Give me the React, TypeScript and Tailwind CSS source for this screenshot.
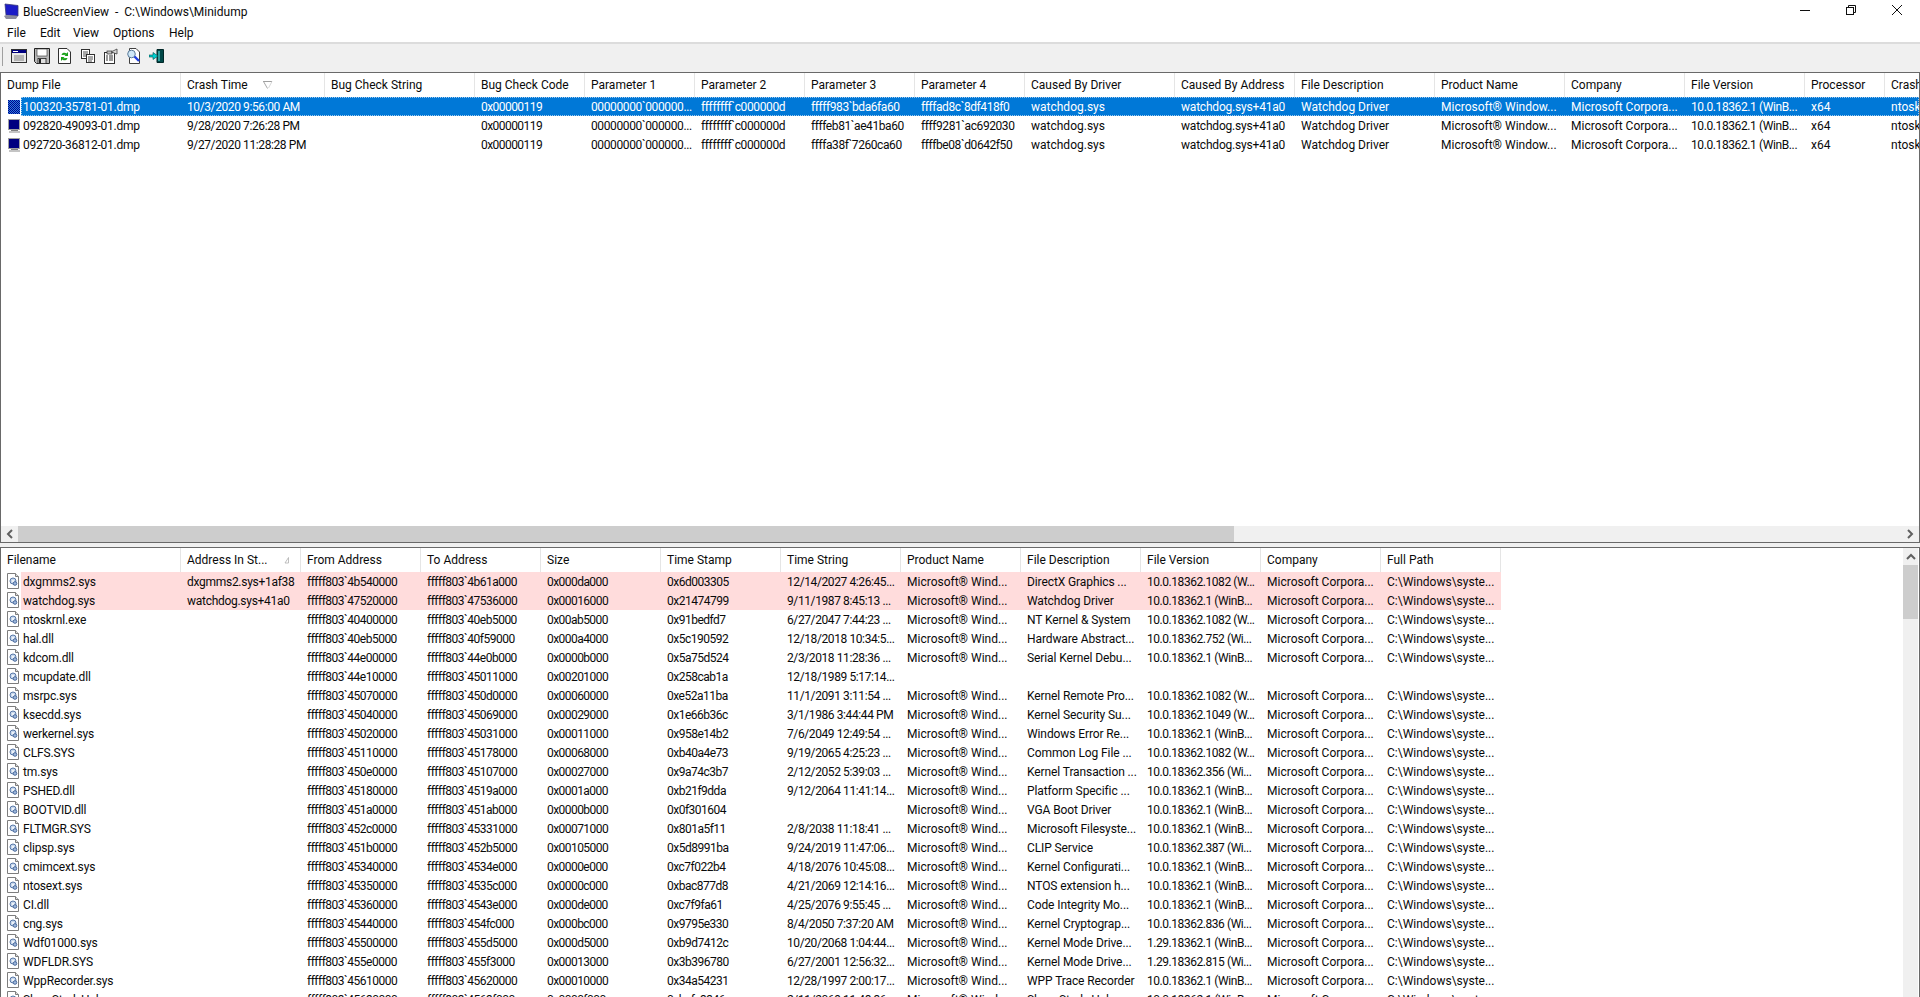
import React from "react";

const topCols = ["w-[180px]","w-[144px]","w-[150px]","w-[110px]","w-[110px]","w-[110px]","w-[110px]","w-[110px]","w-[150px]","w-[120px]","w-[140px]","w-[130px]","w-[120px]","w-[120px]","w-[80px]","w-[150px]"];
const botCols = ["w-[180px]","w-[120px]","w-[120px]","w-[120px]","w-[120px]","w-[120px]","w-[120px]","w-[120px]","w-[120px]","w-[120px]","w-[120px]","w-[120px]"];

const topTrack = ["tracking-[-0.25px]","tracking-[-0.4px]","","tracking-[-0.55px]","tracking-[-0.38px]","tracking-[-0.38px]","tracking-[-0.42px]","tracking-[-0.42px]","","tracking-[-0.2px]","","","","tracking-[-0.4px]","",""];
const botTrack = ["tracking-[-0.15px]","tracking-[-0.28px]","tracking-[-0.5px]","tracking-[-0.5px]","tracking-[-0.55px]","tracking-[-0.5px]","tracking-[-0.4px]","","tracking-[-0.1px]","tracking-[-0.45px]","",""];

const topHead = ["Dump File","Crash Time","Bug Check String","Bug Check Code","Parameter 1","Parameter 2","Parameter 3","Parameter 4","Caused By Driver","Caused By Address","File Description","Product Name","Company","File Version","Processor","Crash Address"];
const botHead = ["Filename","Address In St...","From Address","To Address","Size","Time Stamp","Time String","Product Name","File Description","File Version","Company","Full Path"];

const topTail = ["watchdog.sys","watchdog.sys+41a0","Watchdog Driver","Microsoft® Window...","Microsoft Corpora...","10.0.18362.1 (WinB...","x64","ntoskrnl.exe+1f"];
const topRows: string[][] = [
  ["100320-35781-01.dmp","10/3/2020 9:56:00 AM","","0x00000119","00000000`000000...","ffffffff`c000000d","fffff983`bda6fa60","ffffad8c`8df418f0",...topTail],
  ["092820-49093-01.dmp","9/28/2020 7:26:28 PM","","0x00000119","00000000`000000...","ffffffff`c000000d","ffffeb81`ae41ba60","ffff9281`ac692030",...topTail],
  ["092720-36812-01.dmp","9/27/2020 11:28:28 PM","","0x00000119","00000000`000000...","ffffffff`c000000d","ffffa38f`7260ca60","ffffbe08`d0642f50",...topTail],
];

type B = [string,string,string,string,string,string,string,string,string];
const P = "fffff803`";
const botData: B[] = [
  ["dxgmms2.sys","dxgmms2.sys+1af38","4b540000","4b61a000","0x000da000","0x6d003305","12/14/2027 4:26:45...","DirectX Graphics ...","10.0.18362.1082 (W..."],
  ["watchdog.sys","watchdog.sys+41a0","47520000","47536000","0x00016000","0x21474799","9/11/1987 8:45:13 ...","Watchdog Driver","10.0.18362.1 (WinB..."],
  ["ntoskrnl.exe","","40400000","40eb5000","0x00ab5000","0x91bedfd7","6/27/2047 7:44:23 ...","NT Kernel & System","10.0.18362.1082 (W..."],
  ["hal.dll","","40eb5000","40f59000","0x000a4000","0x5c190592","12/18/2018 10:34:5...","Hardware Abstract...","10.0.18362.752 (Wi..."],
  ["kdcom.dll","","44e00000","44e0b000","0x0000b000","0x5a75d524","2/3/2018 11:28:36 ...","Serial Kernel Debu...","10.0.18362.1 (WinB..."],
  ["mcupdate.dll","","44e10000","45011000","0x00201000","0x258cab1a","12/18/1989 5:17:14...","",""],
  ["msrpc.sys","","45070000","450d0000","0x00060000","0xe52a11ba","11/1/2091 3:11:54 ...","Kernel Remote Pro...","10.0.18362.1082 (W..."],
  ["ksecdd.sys","","45040000","45069000","0x00029000","0x1e66b36c","3/1/1986 3:44:44 PM","Kernel Security Su...","10.0.18362.1049 (W..."],
  ["werkernel.sys","","45020000","45031000","0x00011000","0x958e14b2","7/6/2049 12:49:54 ...","Windows Error Re...","10.0.18362.1 (WinB..."],
  ["CLFS.SYS","","45110000","45178000","0x00068000","0xb40a4e73","9/19/2065 4:25:23 ...","Common Log File ...","10.0.18362.1082 (W..."],
  ["tm.sys","","450e0000","45107000","0x00027000","0x9a74c3b7","2/12/2052 5:39:03 ...","Kernel Transaction ...","10.0.18362.356 (Wi..."],
  ["PSHED.dll","","45180000","4519a000","0x0001a000","0xb21f9dda","9/12/2064 11:41:14...","Platform Specific ...","10.0.18362.1 (WinB..."],
  ["BOOTVID.dll","","451a0000","451ab000","0x0000b000","0x0f301604","","VGA Boot Driver","10.0.18362.1 (WinB..."],
  ["FLTMGR.SYS","","452c0000","45331000","0x00071000","0x801a5f11","2/8/2038 11:18:41 ...","Microsoft Filesyste...","10.0.18362.1 (WinB..."],
  ["clipsp.sys","","451b0000","452b5000","0x00105000","0x5d8991ba","9/24/2019 11:47:06...","CLIP Service","10.0.18362.387 (Wi..."],
  ["cmimcext.sys","","45340000","4534e000","0x0000e000","0xc7f022b4","4/18/2076 10:45:08...","Kernel Configurati...","10.0.18362.1 (WinB..."],
  ["ntosext.sys","","45350000","4535c000","0x0000c000","0xbac877d8","4/21/2069 12:14:16...","NTOS extension h...","10.0.18362.1 (WinB..."],
  ["CI.dll","","45360000","4543e000","0x000de000","0xc7f9fa61","4/25/2076 9:55:45 ...","Code Integrity Mo...","10.0.18362.1 (WinB..."],
  ["cng.sys","","45440000","454fc000","0x000bc000","0x9795e330","8/4/2050 7:37:20 AM","Kernel Cryptograp...","10.0.18362.836 (Wi..."],
  ["Wdf01000.sys","","45500000","455d5000","0x000d5000","0xb9d7412c","10/20/2068 1:04:44...","Kernel Mode Drive...","1.29.18362.1 (WinB..."],
  ["WDFLDR.SYS","","455e0000","455f3000","0x00013000","0x3b396780","6/27/2001 12:56:32...","Kernel Mode Drive...","1.29.18362.815 (Wi..."],
  ["WppRecorder.sys","","45610000","45620000","0x00010000","0x34a54231","12/28/1997 2:00:17...","WPP Trace Recorder","10.0.18362.1 (WinB..."],
  ["SleepStudyHelper.sys","","45630000","4563f000","0x0000f000","0xbcfc3346","2/11/2069 11:48:36...","Sleep Study Helper","10.0.18362.1 (WinB..."],
];

const emptyMeta = (d: B) => d[0] === "mcupdate.dll";
const botRow = (d: B): string[] => [
  d[0], d[1], P + d[2], P + d[3], d[4], d[5], d[6],
  emptyMeta(d) ? "" : "Microsoft® Wind...", d[7], d[8],
  emptyMeta(d) ? "" : "Microsoft Corpora...",
  emptyMeta(d) ? "" : "C:\\Windows\\syste...",
];

function MonitorIcon({ selected }: { selected?: boolean }) {
  return (
    <svg width="16" height="16" viewBox="0 0 16 16" className="shrink-0">
      <defs>
        <pattern id="dith" width="2" height="2" patternUnits="userSpaceOnUse">
          <rect width="2" height="2" fill="#2a7fd8" />
          <rect width="1" height="1" fill="#000090" />
          <rect x="1" y="1" width="1" height="1" fill="#000090" />
        </pattern>
      </defs>
      <rect x="1" y="1" width="12" height="11" fill="#a0a0a0" />
      <rect x="2" y="2" width="10" height="9" fill="#000080" />
      <rect x="4" y="12" width="7" height="1" fill="#808080" />
      <rect x="2" y="13" width="11" height="2" fill="#c4c4c4" />
      {selected && <rect x="1" y="1" width="12" height="14" fill="url(#dith)" />}
    </svg>
  );
}

function DriverIcon() {
  return (
    <svg width="14" height="16" viewBox="0 0 14 16" className="shrink-0">
      <path d="M0.5 0.5H8.5L11.5 3.5V15.5H0.5Z" fill="#fff" stroke="#7d7d7d" />
      <path d="M8.5 0.5V3.5H11.5" fill="#e0e0e0" stroke="#7d7d7d" />
      <circle cx="6" cy="8" r="3" fill="#c8d8ec" stroke="#5878a8" />
      <circle cx="8" cy="10.5" r="1.8" fill="#9fb8dc" stroke="#4a6a9c" />
      <circle cx="6" cy="8" r="0.9" fill="#fff" />
    </svg>
  );
}

function SortUp() {
  return (
    <svg width="12" height="10" viewBox="0 0 12 10" className="shrink-0">
      <path d="M1 1.5H10" stroke="#a0a0a0" />
      <path d="M1.5 1.5L5.5 8.5" stroke="#a8a8a8" />
      <path d="M10 1.5L6.5 8" stroke="#d8d8d8" />
    </svg>
  );
}

function SortSmall() {
  return (
    <svg width="6" height="8" viewBox="0 0 6 8" className="shrink-0">
      <path d="M1 7H4.5V1.5Z" fill="none" stroke="#b0b0b0" strokeWidth="0.8" />
    </svg>
  );
}

function Cell({ w, t, children, first }: { w: string; t: string; children: React.ReactNode; first?: boolean }) {
  return (
    <div className={`${w} ${t} shrink-0 overflow-hidden whitespace-nowrap pt-[1px] ${first ? "pl-[22px]" : "pl-[6px]"}`}>
      {children}
    </div>
  );
}

function Header({ cols, labels, sortIdx, sort, gap }: { cols: string[]; labels: string[]; sortIdx: number; sort: React.ReactNode; gap: string }) {
  return (
    <div className="flex h-[24px] shrink-0 items-center">
      {labels.map((l, i) => (
        <div key={i} className={`${cols[i]} shrink-0 h-full flex items-center pl-[6px] border-r border-[#e5e5e5] overflow-hidden whitespace-nowrap`}>
          <span>{l}</span>
          {i === sortIdx && <span className={`flex ${gap}`}>{sort}</span>}
        </div>
      ))}
    </div>
  );
}

function TopScroll() {
  return (
    <div className="flex h-[16px] shrink-0 bg-[#f0f0f0]">
      <div className="w-[17px] flex items-center justify-center">
        <svg width="8" height="10" viewBox="0 0 8 10"><path d="M6 1L2 5L6 9" fill="none" stroke="#606060" strokeWidth="2" /></svg>
      </div>
      <div className="w-[1216px] bg-[#cdcdcd]" />
      <div className="flex-1" />
      <div className="w-[18px] flex items-center justify-center">
        <svg width="8" height="10" viewBox="0 0 8 10"><path d="M2 1L6 5L2 9" fill="none" stroke="#606060" strokeWidth="2" /></svg>
      </div>
    </div>
  );
}

function WinIcon({ d }: { d: React.ReactNode }) {
  return <svg width="16" height="16" viewBox="0 0 16 16" className="shrink-0">{d}</svg>;
}

const toolIcons: React.ReactNode[] = [
  <>
    <rect x="0.5" y="1.5" width="15" height="13" fill="#e8e8e8" stroke="#303030" />
    <rect x="1" y="2" width="14" height="3" fill="#000080" />
    <rect x="2" y="3" width="5" height="1" fill="#fff" />
    <path d="M3 8H13M3 10H13M3 12H13" stroke="#808080" />
  </>,
  <>
    <path d="M0.5 0.5H15.5V15.5H2.5L0.5 13.5Z" fill="#b8b8b8" stroke="#202020" />
    <rect x="3" y="1" width="10" height="7" fill="#fff" stroke="#303030" strokeWidth="0.6" />
    <rect x="4" y="10.5" width="8" height="5" fill="#e0e0e0" stroke="#202020" strokeWidth="0.8" />
    <rect x="5" y="11" width="2" height="4" fill="#202020" />
  </>,
  <>
    <path d="M1.5 0.5H10L13.5 4V15.5H1.5Z" fill="#fff" stroke="#303030" />
    <path d="M4.5 7A3 3 0 0 1 9.5 5.5L11 4V8H7.5L8.7 6.8" fill="#18a018" />
    <path d="M10.5 10A3 3 0 0 1 5.5 11.5L4 13V9H7.5L6.3 10.2" fill="#18a018" />
  </>,
  <>
    <rect x="1.5" y="1.5" width="8" height="9" fill="#fff" stroke="#303030" />
    <path d="M3 4H8M3 6H8M3 8H6" stroke="#505050" />
    <rect x="6.5" y="6.5" width="8" height="8" fill="#fff" stroke="#303030" />
    <path d="M8 9H13M8 11H13M8 13H12" stroke="#505050" />
  </>,
  <>
    <rect x="1.5" y="4.5" width="10" height="11" fill="#fff" stroke="#303030" />
    <rect x="4" y="3" width="5" height="3" fill="#c0c0c0" stroke="#303030" strokeWidth="0.7" />
    <path d="M3 8H5M3 10H5M3 12H5M6 8H10M6 10H10M6 12H10" stroke="#303030" />
    <path d="M8 4L14 1V6Z" fill="#d8d8d8" stroke="#404040" strokeWidth="0.8" />
  </>,
  <>
    <path d="M3.5 0.5H10L13.5 4V15.5H3.5Z" fill="#fff" stroke="#404040" />
    <circle cx="5.5" cy="6" r="3.8" fill="#cfe8f8" stroke="#5a7a98" />
    <path d="M8.5 8.5L13 13" stroke="#2040e0" strokeWidth="2.4" />
  </>,
  <>
    <path d="M8 1.5H14.5V14.5H8Z" fill="#004848" stroke="#002828" />
    <path d="M10 3V13" stroke="#30a0a0" strokeWidth="2" />
    <path d="M0 7H4V4.5L9 8L4 11.5V9H0Z" fill="#00d0d0" stroke="#004848" strokeWidth="0.6" />
  </>,
];

export default function App() {
  return (
    <div className="h-[997px] w-[1920px] overflow-hidden bg-white flex flex-col font-['Roboto',sans-serif] text-[12px] leading-[19px] text-[#0a0a0a]">
      {/* title bar */}
      <div className="h-[22px] shrink-0 flex pl-[3px]">
        <div className="flex items-center">
          <svg width="16" height="17" viewBox="0 0 16 17" className="shrink-0">
            <path d="M2 1L15 2.5V13L3 12Z" fill="#1c1cc8" stroke="#3a3a78" strokeWidth="0.8" />
            <path d="M1 13L3 12L15 13L13 16H3Z" fill="#8d8d9e" />
          </svg>
          <span className="ml-[4px] pt-[3px] whitespace-pre">BlueScreenView  -  C:\Windows\Minidump</span>
        </div>
        <div className="ml-auto flex items-center h-[20px]">
          <div className="w-[46px] flex justify-center">
            <svg width="10" height="10" viewBox="0 0 10 10"><path d="M0 5.5H10" stroke="#101010" /></svg>
          </div>
          <div className="w-[46px] flex justify-center">
            <svg width="10" height="10" viewBox="0 0 10 10"><rect x="0.5" y="2.5" width="7" height="7" fill="none" stroke="#101010" /><path d="M2.5 2.5V0.5H9.5V7.5H7.5" fill="none" stroke="#101010" /></svg>
          </div>
          <div className="w-[46px] flex justify-center">
            <svg width="10" height="10" viewBox="0 0 10 10"><path d="M0 0L10 10M10 0L0 10" stroke="#101010" /></svg>
          </div>
        </div>
      </div>
      {/* menu */}
      <div className="h-[20px] shrink-0 flex items-center pl-[7px] pt-[2px]">
        <span className="w-[33px]">File</span>
        <span className="w-[33px]">Edit</span>
        <span className="w-[40px]">View</span>
        <span className="w-[56px]">Options</span>
        <span>Help</span>
      </div>
      {/* toolbar */}
      <div className="h-[30px] shrink-0 bg-[#f0f0f0] border-t-2 border-[#dcdcdc] flex items-start pl-[2px] pt-[3px]">
        <div className="w-[1px] h-[19px] bg-[#a0a0a0] mr-[8px]" />
        <div className="flex gap-[7px] pt-[1px]">
          {toolIcons.map((d, i) => <WinIcon key={i} d={d} />)}
        </div>
      </div>
      {/* upper list */}
      <div className="h-[471px] shrink-0 border border-[#696969] flex flex-col overflow-hidden">
        <Header cols={topCols} labels={topHead} sortIdx={1} sort={<SortUp />} gap="ml-[14px]" />
        <div className="flex-1 overflow-hidden">
          {topRows.map((r, ri) => (
            <div key={ri} className="relative flex h-[19px]">
              {ri === 0 && <div className="absolute inset-y-0 left-[20px] right-0 bg-[#0078d7] border border-dotted border-[#9cc8ee]" />}
              <div className="absolute left-[6px] top-[2px]"><MonitorIcon selected={ri === 0} /></div>
              {r.map((c, i) => (
                <div key={i} className={`relative ${ri === 0 ? "text-white" : ""}`}>
                  <Cell w={topCols[i]} t={topTrack[i]} first={i === 0}>{c}</Cell>
                </div>
              ))}
            </div>
          ))}
        </div>
        <TopScroll />
      </div>
      {/* splitter */}
      <div className="h-[4px] shrink-0 bg-[#f0f0f0]" />
      {/* lower list */}
      <div className="flex-1 min-h-0 flex border-t border-x border-[#696969] overflow-hidden">
        <div className="flex-1 min-w-0 flex flex-col overflow-hidden">
          <Header cols={botCols} labels={botHead} sortIdx={1} sort={<SortSmall />} gap="ml-[17px]" />
          <div className="overflow-hidden">
            {botData.map((d, ri) => (
              <div key={ri} className="relative flex h-[19px]">
                {ri < 2 && <div className="absolute inset-y-0 left-[20px] w-[1480px] bg-[#ffdcdc]" />}
                <div className="absolute left-[6px] top-[1px]"><DriverIcon /></div>
                {botRow(d).map((c, i) => (
                  <div key={i} className="relative">
                    <Cell w={botCols[i]} t={botTrack[i]} first={i === 0}>{c}</Cell>
                  </div>
                ))}
              </div>
            ))}
          </div>
        </div>
        <div className="w-[15px] shrink-0 bg-[#f0f0f0] flex flex-col mr-[1px]">
          <div className="h-[17px] flex items-center justify-center">
            <svg width="10" height="8" viewBox="0 0 10 8"><path d="M1 6L5 2L9 6" fill="none" stroke="#606060" strokeWidth="2" /></svg>
          </div>
          <div className="h-[54px] bg-[#cdcdcd]" />
        </div>
      </div>
    </div>
  );
}
